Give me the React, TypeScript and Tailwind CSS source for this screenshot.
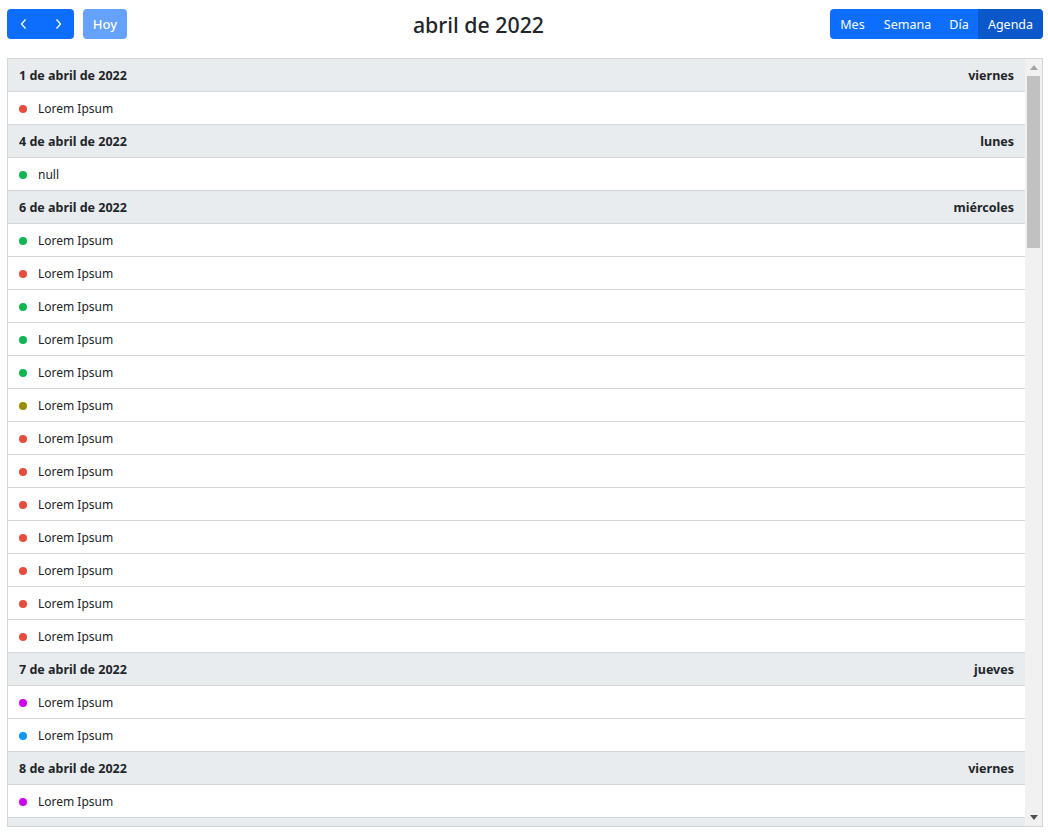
import React from 'react';

type Ev = { title: string; color: string };
type Day = { date: string; weekday: string; events: Ev[] };

const RED = '#e74c3c';
const GREEN = '#10b653';
const OLIVE = '#9a8c00';
const MAGENTA = '#cc00ee';
const BLUE = '#0a98f5';

const ev = (color: string, title = 'Lorem Ipsum'): Ev => ({ title, color });

const DAYS: Day[] = [
  { date: '1 de abril de 2022', weekday: 'viernes', events: [ev(RED)] },
  { date: '4 de abril de 2022', weekday: 'lunes', events: [ev(GREEN, 'null')] },
  {
    date: '6 de abril de 2022',
    weekday: 'miércoles',
    events: [
      ev(GREEN), ev(RED), ev(GREEN), ev(GREEN), ev(GREEN), ev(OLIVE),
      ev(RED), ev(RED), ev(RED), ev(RED), ev(RED), ev(RED), ev(RED)
    ]
  },
  { date: '7 de abril de 2022', weekday: 'jueves', events: [ev(MAGENTA), ev(BLUE)] },
  { date: '8 de abril de 2022', weekday: 'viernes', events: [ev(MAGENTA)] },
  { date: '11 de abril de 2022', weekday: 'lunes', events: [ev(RED), ev(GREEN), ev(RED)] }
];

const VIEWS = [
  { label: 'Mes', w: 'w-[45px]' },
  { label: 'Semana', w: 'w-[65px]' },
  { label: 'Día', w: 'w-[38px]' },
  { label: 'Agenda', w: 'w-[65px]' }
];

export default function App() {
  return (
    <div
      className="w-[1048px] h-[834px] bg-white text-[#212529] text-[12px] pl-[7px] pr-[5px] pt-[9px] overflow-hidden"
      style={{ fontFamily: '"Noto Sans", "Open Sans", sans-serif' }}
    >
      {/* toolbar */}
      <div className="flex items-center justify-between h-[30px] mb-[19px]">
        <div className="flex items-center gap-[9px]">
          <div className="flex rounded-[4px] overflow-hidden">
            <button className="w-[34px] h-[30px] bg-[#0d6efd] text-white flex items-center justify-center">
              <svg width="10" height="12" viewBox="0 0 10 12" fill="none" stroke="currentColor" strokeWidth="1.3">
                <path d="M6.5 1.5 2.5 6 6.5 10.5" />
              </svg>
            </button>
            <button className="w-[33px] h-[30px] bg-[#0d6efd] text-white flex items-center justify-center">
              <svg width="10" height="12" viewBox="0 0 10 12" fill="none" stroke="currentColor" strokeWidth="1.3">
                <path d="M3.5 1.5 7.5 6 3.5 10.5" />
              </svg>
            </button>
          </div>
          <button className="h-[30px] w-[44px] pt-[2px] rounded-[4px] bg-[#65a2fe] text-white text-[13px] font-medium">Hoy</button>
        </div>
        <h2 className="text-[21.3px] font-medium leading-none pt-[1px]">abril de 2022</h2>
        <div className="flex rounded-[4px] overflow-hidden">
          {VIEWS.map(v => (
            <button
              key={v.label}
              className={
                'h-[30px] pt-[2px] text-white text-[12.5px] ' +
                v.w +
                ' ' +
                (v.label === 'Agenda' ? 'bg-[#0a58ca]' : 'bg-[#0d6efd]')
              }
            >
              {v.label}
            </button>
          ))}
        </div>
      </div>

      {/* agenda list */}
      <div className="border border-[#d3d6da] h-[769px] flex overflow-hidden">
        <div className="flex-1 overflow-hidden">
          {DAYS.map(day => (
            <div key={day.date}>
              <div className="flex justify-between items-center h-[33px] pt-[2px] px-[11px] bg-[#e9ecef] border-b border-[#d3d6da] font-bold text-[12.5px]">
                <span>{day.date}</span>
                <span>{day.weekday}</span>
              </div>
              {day.events.map((e, i) => (
                <div
                  key={i}
                  className="flex items-center h-[33px] pt-[2px] px-[11px] border-b border-[#d3d6da] bg-white"
                >
                  <span
                    className="w-2 h-2 rounded-full mr-[11px] shrink-0"
                    style={{ backgroundColor: e.color }}
                  ></span>
                  <span>{e.title}</span>
                </div>
              ))}
            </div>
          ))}
        </div>

        {/* scrollbar */}
        <div className="w-[17px] shrink-0 bg-[#f1f1f1] flex flex-col items-center">
          <div className="h-[17px] w-full flex items-center justify-center">
            <svg width="8" height="5" viewBox="0 0 8 5">
              <path d="M0 5 4 0 8 5Z" fill="#a3a3a3" />
            </svg>
          </div>
          <div className="w-[13px] h-[172px] bg-[#c1c1c1]"></div>
          <div className="flex-1"></div>
          <div className="h-[17px] w-full flex items-center justify-center">
            <svg width="8" height="5" viewBox="0 0 8 5">
              <path d="M0 0 4 5 8 0Z" fill="#505050" />
            </svg>
          </div>
        </div>
      </div>
    </div>
  );
}
